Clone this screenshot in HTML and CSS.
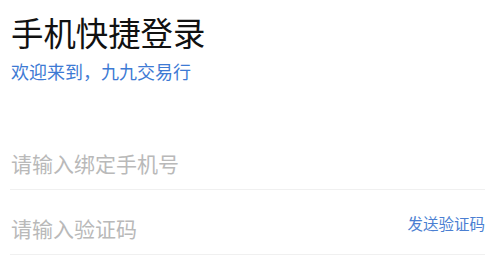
FILE: index.html
```html
<!DOCTYPE html>
<html lang="zh-CN">
<head>
<meta charset="utf-8">
<title>手机快捷登录</title>
<link rel="stylesheet" href="styles.css">
</head>
<body>
<main class="login">
  <h1 class="title">手机快捷登录</h1>
  <p class="subtitle">欢迎来到，九九交易行</p>
  <form class="form">
    <div class="field">
      <input class="input" type="tel" placeholder="请输入绑定手机号">
    </div>
    <div class="field">
      <input class="input" type="text" placeholder="请输入验证码">
      <span class="send">发送验证码</span>
    </div>
  </form>
</main>
</body>
</html>
```

FILE: styles.css
```css
* { box-sizing: border-box; }
html, body {
  margin: 0;
  padding: 0;
  background: #fff;
  font-family: "Noto Sans CJK SC", "Noto Sans", sans-serif;
}
.login {
  padding: 12px 11px 0 10px;
}
.title {
  margin: 0;
  font-size: 32.4px;
  line-height: 40px;
  font-weight: 400;
  color: #111;
  padding-left: 1px;
}
.subtitle {
  margin: 7px 0 0;
  font-size: 18px;
  line-height: 24px;
  color: #3d7ad4;
  padding-left: 1px;
}
.form {
  margin-top: 42px;
  display: flex;
  flex-direction: column;
}
.field {
  display: flex;
  align-items: flex-end;
  height: 65px;
  padding-bottom: 14px;
  border-bottom: 1px solid #f0f0f0;
}
.input {
  flex: 1;
  min-width: 0;
  border: 0;
  outline: 0;
  padding: 0 0 0 1px;
  margin: 0;
  background: transparent;
  font-family: inherit;
  font-size: 21px;
  line-height: 24px;
  height: 24px;
  color: #333;
}
.input::placeholder {
  color: #b9b9b9;
}
.send {
  align-self: center;
  margin-top: 16px;
  font-size: 15.5px;
  line-height: 20px;
  color: #4b7fd2;
  white-space: nowrap;
}
```
